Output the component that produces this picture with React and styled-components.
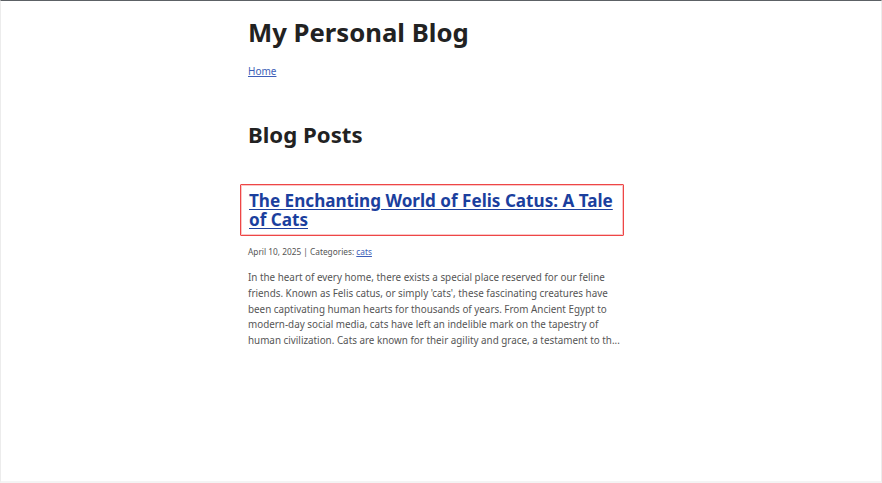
import React from 'react'
import styled, { createGlobalStyle } from 'styled-components'

const GlobalStyle = createGlobalStyle`
  html, body {
    margin: 0;
    padding: 0;
    background: #fff;
  }
  body {
    font-family: "Noto Sans", "Open Sans", sans-serif;
    color: #212121;
  }
`

function App() {
  return (
    <>
      <GlobalStyle />
      <Page>
        <Main>
          <SiteTitle>My Personal Blog</SiteTitle>
          <Nav>
            <NavLink href="#">Home</NavLink>
          </Nav>
          <SectionTitle>Blog Posts</SectionTitle>
          <Post>
            <PostTitleBox>
              <PostTitle href="#">The Enchanting World of Felis Catus: A Tale of Cats</PostTitle>
            </PostTitleBox>
            <Meta>
              April 10, 2025 | Categories: <MetaLink href="#">cats</MetaLink>
            </Meta>
            <Excerpt>
              In the heart of every home, there exists a special place reserved for our feline
              friends. Known as Felis catus, or simply 'cats', these fascinating creatures have
              been captivating human hearts for thousands of years. From Ancient Egypt to
              modern-day social media, cats have left an indelible mark on the tapestry of
              human civilization. Cats are known for their agility and grace, a testament to th...
            </Excerpt>
          </Post>
        </Main>
      </Page>
    </>
  )
}

export default App

const Page = styled.div`
  box-sizing: border-box;
  width: 882px;
  height: 483px;
  border-top: 1px solid #5c6165;
  border-left: 1px solid #ececec;
  border-right: 1px solid #ececec;
  border-bottom: 2px solid #f4f4f4;
  overflow: hidden;
`
const Main = styled.main`
  width: 376px;
  margin-left: 247px;
  padding-top: 15px;
`
const SiteTitle = styled.h1`
  margin: 0;
  font-size: 25.7px;
  font-weight: 700;
  line-height: 34px;
  color: #222;
`
const Nav = styled.nav`
  margin-top: 14px;
  font-size: 10px;
  line-height: 14px;
`
const NavLink = styled.a`
  color: #3e5fb8;
  text-decoration: underline;
`
const SectionTitle = styled.h2`
  margin: 42px 0 0;
  font-size: 22.2px;
  font-weight: 700;
  line-height: 30px;
  color: #222;
`
const Post = styled.article`
  margin-top: 34px;
`
const PostTitleBox = styled.div`
  margin: 0 0 0 -8px;
  padding: 6px 8px 6px 8px;
  border: 1px solid #ee4646;
  box-shadow: inset 0 0 0 1px rgba(238, 70, 70, 0.3);
  border-radius: 1px;
`
const PostTitle = styled.a`
  display: block;
  font-size: 17.1px;
  font-weight: 700;
  line-height: 19px;
  color: #1b3f9e;
  text-decoration: underline;
  text-underline-offset: 2px;
`
const Meta = styled.p`
  margin: 9px 0 0;
  font-size: 8.3px;
  line-height: 14px;
  color: #555;
`
const MetaLink = styled.a`
  color: #3e5fb8;
  text-decoration: underline;
`
const Excerpt = styled.p`
  margin: 11px 0 0;
  font-size: 9.85px;
  line-height: 15.75px;
  color: #555;
`
